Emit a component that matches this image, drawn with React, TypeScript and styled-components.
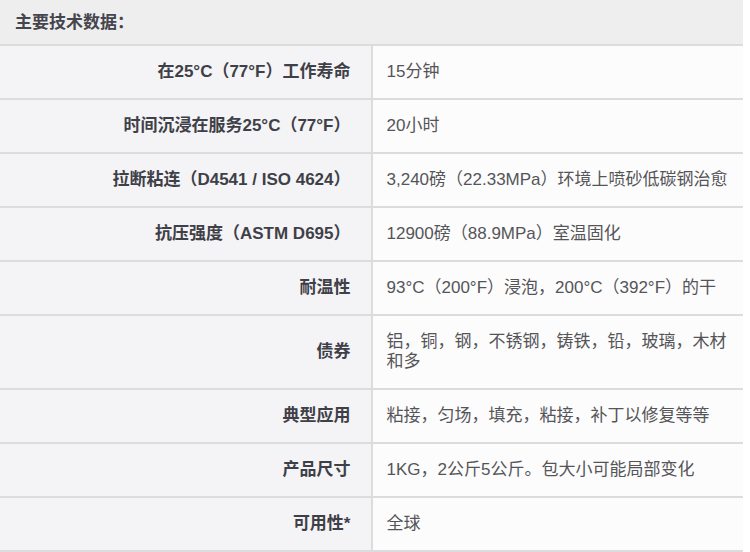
import React from "react";
import styled, { createGlobalStyle } from "styled-components";

const Global = createGlobalStyle`
  html, body { margin: 0; padding: 0; background: #ffffff; }
  body { font-family: "Liberation Sans", Arial, "Noto Sans CJK SC", sans-serif; }
`;

const Wrap = styled.div`
  width: 743px;
`;

const Table = styled.table`
  width: 743px;
  border-collapse: collapse;
  table-layout: fixed;
  font-size: 17px;
  line-height: 20px;
`;

const HeaderCell = styled.th`
  background: #eeeeef;
  text-align: left;
  font-weight: bold;
  color: #45454d;
  padding: 13px 15px 11px 15px;
  height: 20px;
  border-bottom: 2px solid #dcdcde;
`;

const Row = styled.tr`
  border-bottom: 2px solid #dcdcde;
`;

const Label = styled.td`
  width: 342px;
  background: #f4f4f6;
  color: #3f3f48;
  font-weight: bold;
  text-align: right;
  padding: 16px 20px 16px 10px;
  border-right: 2px solid #dcdcde;
  vertical-align: middle;
`;

const Value = styled.td`
  background: #fcfcfd;
  color: #555558;
  text-align: left;
  padding: 16px 14px 16px 14px;
  vertical-align: middle;
`;

const rows: [string, string][] = [
  ["在25°C（77°F）工作寿命", "15分钟"],
  ["时间沉浸在服务25°C（77°F）", "20小时"],
  ["拉断粘连（D4541 / ISO 4624）", "3,240磅（22.33MPa）环境上喷砂低碳钢治愈"],
  ["抗压强度（ASTM D695）", "12900磅（88.9MPa）室温固化"],
  ["耐温性", "93°C（200°F）浸泡，200°C（392°F）的干"],
  ["债券", "铝，铜，钢，不锈钢，铸铁，铅，玻璃，木材和多"],
  ["典型应用", "粘接，匀场，填充，粘接，补丁以修复等等"],
  ["产品尺寸", "1KG，2公斤5公斤。包大小可能局部变化"],
  ["可用性*", "全球"],
];

export default function App() {
  return (
    <Wrap>
      <Global />
      <Table>
        <thead>
          <tr>
            <HeaderCell colSpan={2}>主要技术数据：</HeaderCell>
          </tr>
        </thead>
        <tbody>
          {rows.map(([k, v]) => (
            <Row key={k}>
              <Label>{k}</Label>
              <Value>{v}</Value>
            </Row>
          ))}
        </tbody>
      </Table>
    </Wrap>
  );
}
